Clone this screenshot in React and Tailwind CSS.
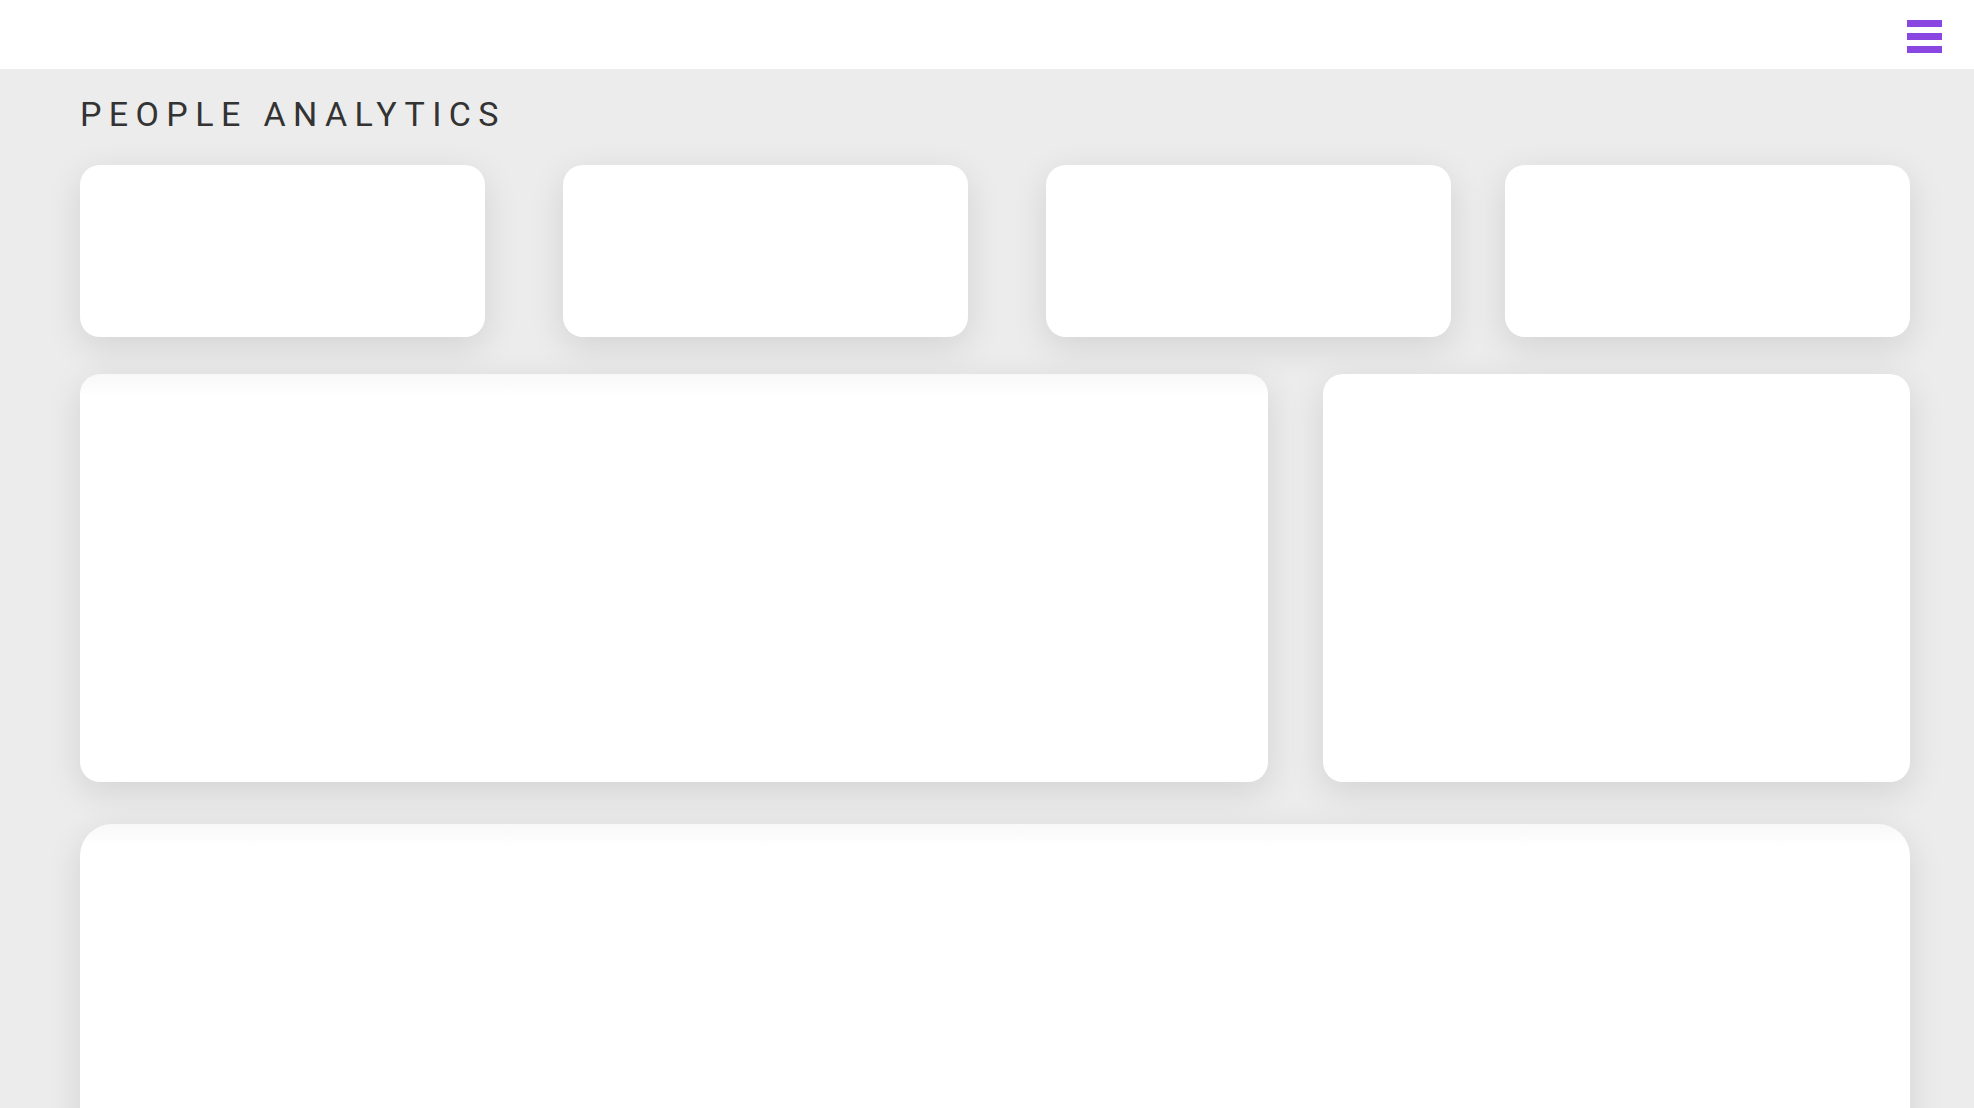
import React from 'react';

const Card = ({ className = '' }) => (
  <div className={`bg-white shadow-[0_10px_36px_rgba(0,0,0,0.11)] ${className}`} />
);

const App = () => {
  return (
    <div className="min-h-screen bg-[#ececec] font-['Roboto',sans-serif]">
      {/* Top bar */}
      <header className="h-[69px] bg-white flex justify-end pr-[32px] pt-[20px]">
        <button className="flex flex-col gap-[6px]">
          <span className="block w-[35px] h-[7px] bg-[#8a46e0]" />
          <span className="block w-[35px] h-[7px] bg-[#8a46e0]" />
          <span className="block w-[35px] h-[7px] bg-[#8a46e0]" />
        </button>
      </header>

      <main className="pl-[80px] pr-[64px] pb-[80px]">
        <h1 className="mt-[25px] mb-[31px] text-[34px] leading-[40px] font-normal tracking-[7.4px] text-[#333]">
          PEOPLE ANALYTICS
        </h1>

        {/* KPI cards */}
        <div className="flex h-[172px]">
          <Card className="w-[405px] rounded-[20px]" />
          <Card className="w-[405px] rounded-[20px] ml-[78px]" />
          <Card className="w-[405px] rounded-[20px] ml-[78px]" />
          <Card className="w-[405px] rounded-[20px] ml-auto" />
        </div>

        {/* Charts */}
        <div className="flex mt-[37px] h-[408px]">
          <Card className="w-[1188px] rounded-[20px] bg-[linear-gradient(#f8f8f8,#ffffff_22px)]" />
          <Card className="w-[587px] rounded-[20px] ml-auto" />
        </div>

        {/* Table */}
        <Card className="mt-[42px] h-[520px] rounded-[32px] bg-[linear-gradient(#f8f8f8,#ffffff_22px)]" />
      </main>
    </div>
  );
};

export default App;
